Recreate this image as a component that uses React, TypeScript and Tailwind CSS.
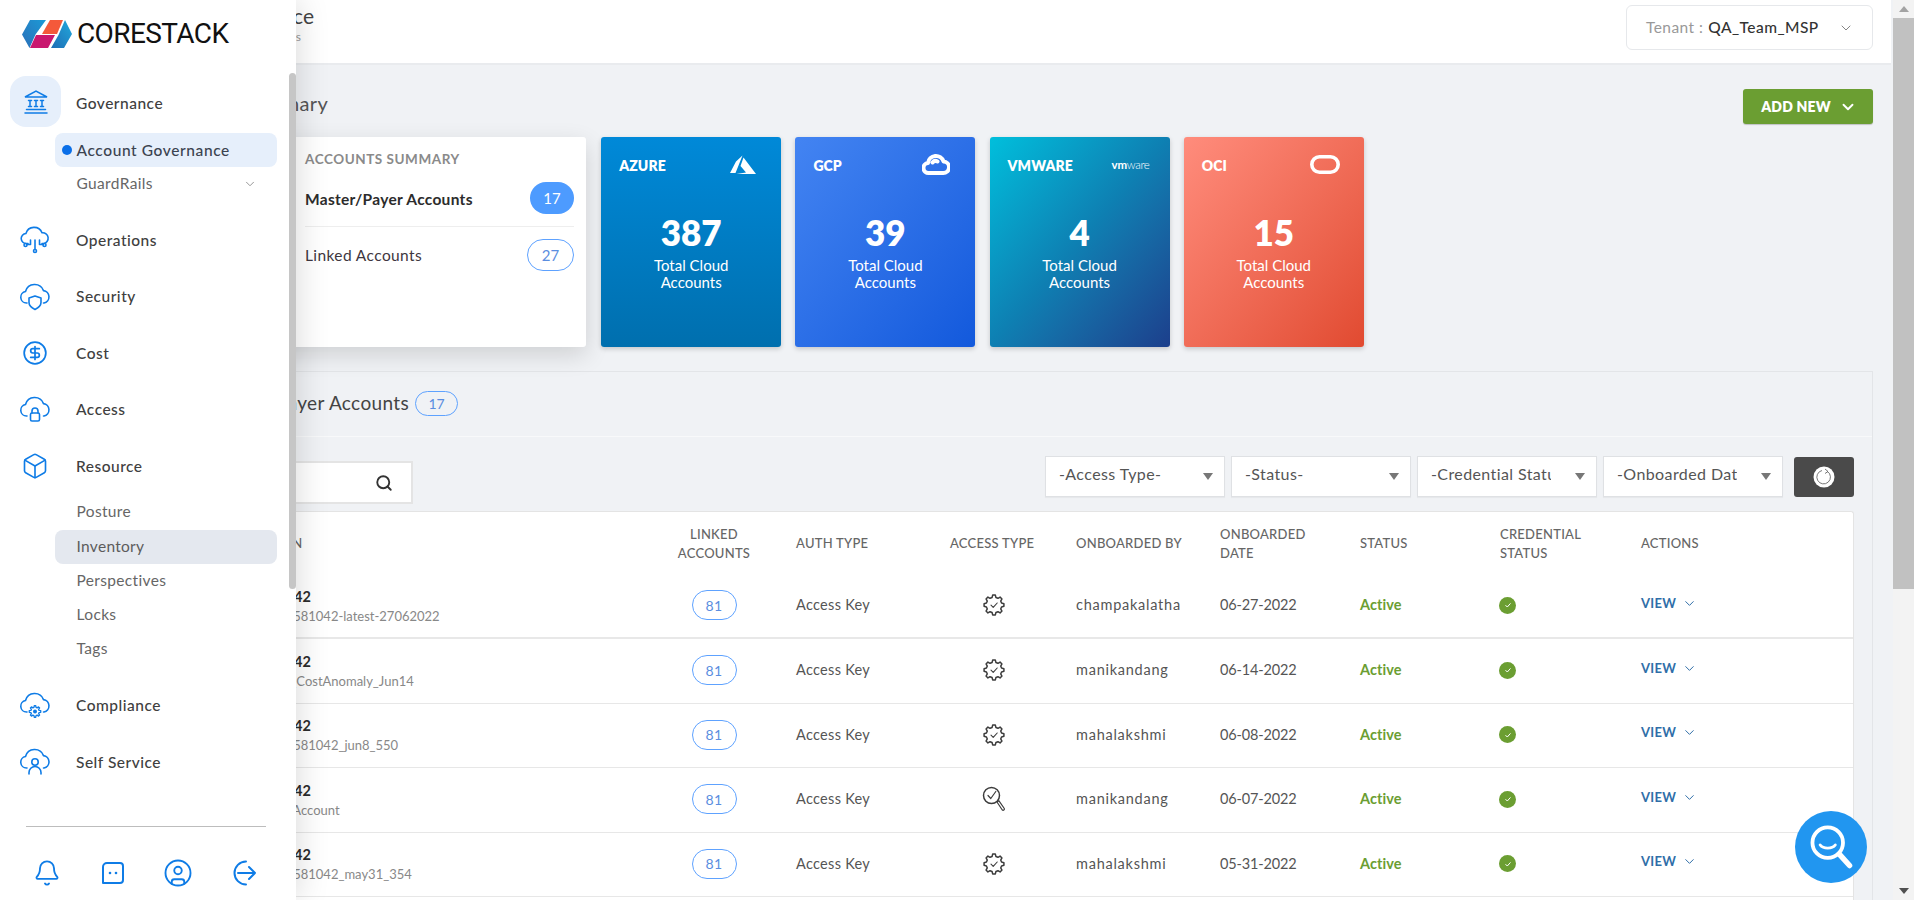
import { ChevronDown, CircleDollarSign, Bell, CircleUser, Box, Search } from "lucide-react";
import type { ReactNode } from "react";

const cloud = "M8 20H7.5a5.8 5.8 0 0 1-1-11.5A9.5 9.5 0 0 1 24.5 7.6 6.3 6.3 0 0 1 25 20h-.5";

function NavSvg({ children }: { children: ReactNode }) {
  return (
    <svg viewBox="0 0 32 28" fill="none" stroke="#0f7ce6" strokeWidth="1.6" strokeLinecap="round" strokeLinejoin="round" className="h-[28px] w-[32px]">
      {children}
    </svg>
  );
}

function gearPath(cx: number, cy: number, outer: number, inner: number, teeth: number) {
  const pts: string[] = [];
  const step = (Math.PI * 2) / teeth;
  for (let i = 0; i < teeth; i++) {
    const a = i * step;
    const offs: [number, number][] = [
      [-0.32, inner],
      [-0.17, outer],
      [0.17, outer],
      [0.32, inner],
    ];
    offs.forEach(([o, r]) => {
      const t = a + o * step;
      pts.push(`${(cx + Math.cos(t) * r).toFixed(2)} ${(cy + Math.sin(t) * r).toFixed(2)}`);
    });
  }
  return "M" + pts.join("L") + "Z";
}

function GearCheck() {
  return (
    <svg viewBox="0 0 22 22" fill="none" stroke="#3c3c3c" strokeWidth="1.5" strokeLinejoin="round" strokeLinecap="round" className="h-[22px] w-[22px]">
      <path d={gearPath(11, 11, 10, 7.8, 8)} />
      <path d="M8 11.2l2.2 2.2 4-4.4" strokeWidth="1.1" />
    </svg>
  );
}

function SearchTick() {
  return (
    <svg viewBox="0 0 24 26" fill="none" stroke="#3c3c3c" strokeWidth="1.5" strokeLinecap="round" strokeLinejoin="round" className="h-[26px] w-[24px]">
      <circle cx="9.500" cy="9.500" r="8" />
      <path d="M6 9.500l2.800 3 5-7" strokeWidth="1.2" />
      <path d="M15 16l1.800-1.300 5.500 7.800a1.300 1.300 0 0 1-2 1.500z" strokeWidth="1.200" />
    </svg>
  );
}

function Logo() {
  return (
    <svg viewBox="0 0 50 28" className="h-[28px] w-[50px]">
      <defs>
        <linearGradient id="lg1" x1="0" y1="1" x2="1" y2="0">
          <stop offset="0" stopColor="#2a6fb8" />
          <stop offset="1" stopColor="#1c9ad6" />
        </linearGradient>
        <linearGradient id="lg2" x1="0" y1="1" x2="1" y2="0">
          <stop offset="0" stopColor="#1e6db5" />
          <stop offset="1" stopColor="#22a9dc" />
        </linearGradient>
      </defs>
      <polygon points="0,14.5 8,0 24,0 13.5,14.5 7.5,28" fill="url(#lg1)" />
      <polygon points="28,0 41,0 35,14 20,14" fill="#f4593a" />
      <polygon points="14,15 33,15 26,28 8,28" fill="#c9186f" />
      <polygon points="43,0 50,14 42,28 29,28 36.5,15" fill="url(#lg2)" />
    </svg>
  );
}

const topIcons: Record<string, ReactNode> = {
  Operations: (
    <NavSvg>
      <path d="M9 17.5H7.5a5 5 0 0 1-.6-10A8.5 8.5 0 0 1 23 6.8a5.4 5.4 0 0 1 1.5 10.7H23" />
      <path d="M16 14v9M11.5 14v4.5H8M20.5 14v4.5H24" />
      <circle cx="6.5" cy="19" r="1.5" />
      <circle cx="25.5" cy="19" r="1.5" />
      <circle cx="16" cy="25" r="1.5" />
    </NavSvg>
  ),
  Security: (
    <NavSvg>
      <path d={cloud} />
      <path d="M16 13l6 2v4.5c0 3.5-3 5.5-6 7-3-1.500-6-3.500-6-7V15z" fill="#fff" />
    </NavSvg>
  ),
  Access: (
    <NavSvg>
      <path d={cloud} />
      <rect x="11.500" y="17" width="9" height="8" rx="1.500" fill="#fff" />
      <path d="M13 17v-2a3 3 0 0 1 6 0v2" />
    </NavSvg>
  ),
  Compliance: (
    <NavSvg>
      <path d={cloud} />
      <path d={gearPath(16, 19.5, 5.8, 4.2, 8)} fill="#fff" strokeWidth="1.3" />
      <circle cx="16" cy="19.500" r="2" fill="#0f7ce6" stroke="none" />
    </NavSvg>
  ),
  "Self Service": (
    <NavSvg>
      <path d={cloud} />
      <circle cx="16" cy="14" r="3.200" />
      <path d="M10 26v-1.500a6 6 0 0 1 12 0V26" />
    </NavSvg>
  ),
};

function NavRow({ label, icon }: { label: string; icon: ReactNode }) {
  return (
    <div className="flex h-[56.500px] items-center">
      <div className="flex w-[70px] justify-center">{icon}</div>
      <span className="ml-[6px] text-[15.500px] font-medium tracking-[0.5px] text-[#404040]">{label}</span>
    </div>
  );
}

function SubRow({ label, active, selected }: { label: string; active?: boolean; selected?: boolean }) {
  return (
    <div
      className={
        "ml-[55px] flex h-[34px] w-[222px] items-center rounded-lg pl-[21.500px] text-[15.500px] " +
        (active ? "bg-[#e6effb] pt-[1px] font-medium tracking-[0.6px] text-[#3b4350] " : selected ? "bg-[#e4e8ef] tracking-[0.3px] text-[#5c5c5c] " : "tracking-[0.35px] text-[#666666] ")
      }
    >
      {label}
    </div>
  );
}

function Sidebar() {
  return (
    <aside className="absolute left-0 top-0 z-10 flex h-[900px] w-[296px] flex-col bg-white shadow-[0_0_32px_rgba(0,0,0,0.16)]">
      <div className="absolute right-0 top-[73px] h-[516px] w-[7px] rounded bg-[#c6c6c6]" />
      <div className="flex h-[66px] items-center pl-[22px] pt-[1px]">
        <Logo />
        <span className="ml-[5px] font-['Roboto',sans-serif] text-[28px] font-[450] leading-none tracking-[-0.6px] text-[#111111]">
          CORESTACK
        </span>
      </div>
      <div className="mt-[10px] flex h-[51px] items-center">
        <div className="ml-[10px] flex h-[51px] w-[51px] items-center justify-center rounded-2xl bg-[#e6effb]">
          <svg viewBox="0 0 28 26" fill="none" stroke="#0f7ce6" strokeWidth="1.500" strokeLinecap="round" className="h-[26px] w-[28px]">
            <path d="M3 8L14 2l11 6H3zM3 24h22M4.500 20.500h19" />
            <path d="M8 11.500v6M14 11.500v6M20 11.500v6M6.500 11.500h3M12.500 11.500h3M18.500 11.500h3M6.500 17.500h3M12.500 17.500h3M18.500 17.500h3" />
          </svg>
        </div>
        <span className="ml-[15px] pt-[4px] text-[15.500px] font-medium tracking-[0.5px] text-[#404040]">Governance</span>
      </div>
      <div className="relative mt-[6px]">
        <span className="absolute left-[62px] top-[12px] h-[10px] w-[10px] rounded-full bg-[#0a6fe8]" />
        <SubRow label="Account Governance" active />
      </div>
      <div className="relative">
        <SubRow label="GuardRails" />
        <ChevronDown className="absolute left-[243px] top-[10px] h-[14px] w-[14px] text-[#888888]" strokeWidth={1.500} />
      </div>
      <div className="mt-[11px]">
        <NavRow label="Operations" icon={topIcons.Operations} />
        <NavRow label="Security" icon={topIcons.Security} />
        <NavRow label="Cost" icon={<CircleDollarSign className="h-[26px] w-[26px] text-[#0f7ce6]" strokeWidth={1.600} />} />
        <NavRow label="Access" icon={topIcons.Access} />
        <NavRow label="Resource" icon={<Box className="h-[28px] w-[28px] text-[#0f7ce6]" strokeWidth={1.400} />} />
      </div>
      <SubRow label="Posture" />
      <div className="mt-[1px]">
        <SubRow label="Inventory" selected />
      </div>
      <SubRow label="Perspectives" />
      <SubRow label="Locks" />
      <SubRow label="Tags" />
      <div className="mt-[12px]">
        <NavRow label="Compliance" icon={topIcons.Compliance} />
        <NavRow label="Self Service" icon={topIcons["Self Service"]} />
      </div>
      <div className="mx-[26px] mt-[35px] w-[240px] border-t border-[#bdbdbd]" />
      <div className="mt-[31px] flex items-center justify-between pl-[33px] pr-[39px] text-[#0f7ce6]">
        <Bell className="h-[28px] w-[28px]" strokeWidth={1.600} />
        <svg viewBox="0 0 26 26" fill="none" stroke="currentColor" strokeWidth="2" className="ml-[1px] h-[26px] w-[26px]">
          <path d="M7 3h13a3 3 0 0 1 3 3v14a3 3 0 0 1-3 3H3V7a4 4 0 0 1 4-4z" strokeLinejoin="round" />
          <circle cx="10" cy="13" r="1.300" fill="currentColor" stroke="none" />
          <circle cx="16" cy="13" r="1.300" fill="currentColor" stroke="none" />
        </svg>
        <CircleUser className="h-[30px] w-[30px]" strokeWidth={1.500} />
        <svg viewBox="0 0 26 28" fill="none" stroke="currentColor" strokeWidth="2" strokeLinecap="round" strokeLinejoin="round" className="h-[28px] w-[26px]">
          <path d="M15 2.500A11.500 11.500 0 0 0 15 25.500" />
          <path d="M7 14h17M18 8l6 6-6 6" />
        </svg>
      </div>
    </aside>
  );
}

const clouds = [
  {
    name: "AZURE",
    count: 387,
    bg: "bg-gradient-to-b from-[#0089d8] to-[#006fae]",
    icon: (
      <svg viewBox="0 0 26 20" fill="#fff" className="-mt-[1px] h-[20px] w-[26px]">
        <path d="M12.500 0.500L6 6.500 0 18h5.500zM13.500 2.500l-3 8.500 5.500 6.500-9.500 1.500H26z" />
      </svg>
    ),
  },
  {
    name: "GCP",
    count: 39,
    bg: "bg-gradient-to-br from-[#4384f2] to-[#1259dc]",
    icon: (
      <svg viewBox="0 0 28 24" fill="none" stroke="#fff" strokeWidth="4" strokeLinecap="round" strokeLinejoin="round" className="-mt-[3px] h-[24px] w-[28px]">
        <path d="M8 21H7a5 5 0 0 1-1-10 8 8 0 0 1 15.500-1.600A5.800 5.800 0 0 1 21 21H8zM10.500 10.500a4 4 0 0 1 5-1" />
      </svg>
    ),
  },
  {
    name: "VMWARE",
    count: 4,
    bg: "bg-gradient-to-br from-[#00bfdc] via-[#0e7fb2] to-[#1c3f8c]",
    icon: (
      <span className="-mr-[5px] -mt-[2px] text-[11.500px] leading-none tracking-[-0.3px] text-white">
        <span className="font-bold">vm</span>
        <span className="font-light">ware</span>
      </span>
    ),
  },
  {
    name: "OCI",
    count: 15,
    bg: "bg-gradient-to-br from-[#ff8c7c] to-[#e14a30]",
    icon: (
      <svg viewBox="0 0 30 19" fill="none" stroke="#fff" strokeWidth="3.600" className="-mr-[1px] -mt-[3px] h-[19px] w-[30px]">
        <rect x="1.800" y="1.800" width="26.400" height="15.400" rx="7.700" />
      </svg>
    ),
  },
];

function CloudCard({ name, count, bg, icon }: (typeof clouds)[number]) {
  return (
    <div className={"flex h-[210px] w-[180px] flex-col rounded-[3px] shadow-[0_2px_5px_rgba(0,0,0,0.18)] " + bg}>
      <div className="flex h-[56px] items-center justify-between pl-[18px] pr-[25px] pt-[1px]">
        <span className="text-[14px] font-extrabold tracking-[0.1px] text-white">{name}</span>
        {icon}
      </div>
      <div className="mt-[17px] text-center text-[35px] font-extrabold leading-[44px] text-white">{count}</div>
      <div className="mt-[3px] text-center text-[15px] leading-[17px] text-white">
        Total Cloud
        <br />
        Accounts
      </div>
    </div>
  );
}

const rows = [
  { sub: "QA_MSP_Tea_581042-latest-27062022", access: "gear", by: "champakalatha", date: "06-27-2022" },
  { sub: "Test_Payer_1s_CostAnomaly_Jun14", access: "gear", by: "manikandang", date: "06-14-2022" },
  { sub: "QA_MSP_Tea_581042_jun8_550", access: "gear", by: "mahalakshmi", date: "06-08-2022" },
  { sub: "QA_Master_A Account", access: "search", by: "manikandang", date: "06-07-2022" },
  { sub: "QA_MSP_Tea_581042_may31_354", access: "gear", by: "mahalakshmi", date: "05-31-2022" },
  { sub: "QA_MSP_Tea_581042_may30_120", access: "gear", by: "mahalakshmi", date: "05-30-2022" },
];

const gridCols = "grid grid-cols-[533px_132px_154px_126px_144px_140px_140px_141px_1fr] items-center";

function Filter({ label }: { label: string }) {
  return (
    <div className="flex h-[41px] w-[180px] items-center justify-between border border-[#dfe1e4] bg-white pl-[13px] pr-[11px] shadow-[0_1px_1px_rgba(0,0,0,0.04)]">
      <span className="mb-[5px] w-[120px] overflow-hidden whitespace-nowrap text-[16px] tracking-[0.4px] text-[#555555]">{label}</span>
      <span className="h-0 w-0 border-x-[5px] border-t-[7px] border-x-transparent border-t-[#777777]" />
    </div>
  );
}

function Head({ children }: { children: ReactNode }) {
  return <div className="text-[13px] font-medium uppercase leading-[19px] tracking-[0.25px] text-[#666666]">{children}</div>;
}

export default function App() {
  return (
    <div className="relative flex h-[900px] w-[1920px] overflow-hidden bg-white font-['Lato',sans-serif]">
      <Sidebar />
      <main className="h-[900px] w-[1893px] shrink-0 overflow-hidden bg-[#f0f2f5]">
        <header className="flex h-[65px] w-[1891px] items-start justify-between border-b-2 border-[#e9ebee] bg-white pr-[18px]">
          <div className="mt-[3px] w-[314px] text-right">
            <div className="text-[21px] leading-[26px] text-[#444444]">Account Governance</div>
            <div className="pr-[13px] text-[12px] leading-[16px] text-[#999999]">Accounts</div>
          </div>
          <div className="mt-[5px] flex h-[45px] w-[247px] items-center rounded-md border border-[#e6e8eb] bg-white pl-[19px] text-[15.500px] tracking-[0.45px]">
            <span className="text-[#999999]">Tenant :</span>
            <span className="ml-[5px] font-medium text-[#333333]">QA_Team_MSP</span>
            <ChevronDown className="ml-[19px] h-[16px] w-[16px] text-[#666666]" strokeWidth={1.200} />
          </div>
        </header>
        <div className="pr-[20px]">
          <div className="mt-[24px] flex h-[35px] items-center justify-between">
            <div className="w-[328px] pb-[7px] text-right text-[20px] tracking-[0.3px] text-[#555555]">Accounts Summary</div>
            <button className="flex h-[35px] w-[130px] items-center justify-center gap-[8px] rounded-[3px] bg-[#6b9e32] pl-[2px] text-[14px] font-extrabold tracking-[0.2px] text-white shadow-[0_1px_1px_rgba(0,0,0,0.2)]">
              ADD NEW
              <ChevronDown className="h-[18px] w-[18px]" strokeWidth={2.500} />
            </button>
          </div>
          <div className="ml-[200px] mt-[13px] flex gap-[14.200px]">
            <div className="mr-[1px] h-[210px] w-[386px] rounded-[3px] bg-white pl-[105px] pr-[12px] shadow-[0_8px_24px_rgba(0,0,0,0.14)]">
              <div className="pt-[12px] text-[13.500px] font-bold uppercase tracking-[0.55px] text-[#8a8a8a]">Accounts Summary</div>
              <div className="mt-[11px] flex h-[47px] items-center justify-between border-b border-[#eeeeee] pb-[10px]">
                <span className="pt-[2px] text-[15.500px] font-bold tracking-[0.3px] text-[#2c2c2c]">Master/Payer Accounts</span>
                <span className="flex h-[32px] w-[44px] items-center justify-center rounded-full bg-[#4d9bff] text-[15px] text-white">17</span>
              </div>
              <div className="mt-[12px] flex items-center justify-between">
                <span className="text-[15.500px] tracking-[0.4px] text-[#3e3640]">Linked Accounts</span>
                <span className="flex h-[32px] w-[47px] items-center justify-center rounded-full border border-[#5ea2ff] text-[15px] text-[#5b8ee0]">27</span>
              </div>
            </div>
            {clouds.map((c) => (
              <CloudCard key={c.name} {...c} />
            ))}
          </div>
          <section className="ml-[110px] mt-[24px] border border-b-0 border-[#e3e5e8] pb-[20px]">
            <div className="flex h-[65px] items-center border-b border-[#f8f9fa] pb-[1px]">
              <div className="w-[298px] text-right text-[19px] tracking-[0.35px] text-[#444444]">Master/Payer Accounts</div>
              <span className="ml-[6px] flex h-[25px] w-[43px] items-center justify-center rounded-full border border-[#5ea2ff] text-[14px] text-[#5b8ee0]">17</span>
            </div>
            <div className="flex h-[74px] items-start justify-between pl-[20px] pr-[18px] pt-[19px]">
              <div className="mt-[5px] flex h-[43px] w-[282px] items-center justify-end border-2 border-[#e4e4e4] bg-white pr-[18px]">
                <Search className="h-[18px] w-[18px] text-[#333333]" strokeWidth={2.500} />
              </div>
              <div className="flex items-center">
                <div className="flex gap-[6px]">
                  <Filter label="-Access Type-" />
                  <Filter label="-Status-" />
                  <Filter label="-Credential Status-" />
                  <Filter label="-Onboarded Date-" />
                </div>
                <button className="ml-[11px] flex h-[40px] w-[60px] items-center justify-center rounded-[3px] bg-[#4a4a4a]">
                  <svg viewBox="0 0 22 22" className="h-[22px] w-[22px]">
                    <circle cx="11" cy="11" r="10.500" fill="#fff" />
                    <path d="M14.500 5.500A6.800 6.800 0 1 1 9 4.500" fill="none" stroke="#555" strokeWidth="0.800" />
                    <path d="M12 3l3 2.500-3 2" fill="none" stroke="#555" strokeWidth="0.800" />
                  </svg>
                </button>
              </div>
            </div>
            <div className="ml-[19px] mr-[18px] rounded-t-[3px] border border-b-0 border-[#e4e4e4] bg-white">
              <div className={gridCols + " h-[62.500px] pt-[1px]"}>
                <div className="pl-[84px]"><Head>Description</Head></div>
                <div className="w-[100px] text-center"><Head>Linked<br />Accounts</Head></div>
                <Head>Auth Type</Head>
                <Head>Access Type</Head>
                <Head>Onboarded By</Head>
                <Head>Onboarded<br />Date</Head>
                <Head>Status</Head>
                <Head>Credential<br />Status</Head>
                <Head>Actions</Head>
              </div>
              {rows.map((r, i) => (
                <div
                  key={r.date}
                  className={gridCols + " h-[64.500px] pb-[1px] text-[14.500px] tracking-[0.3px] text-[#555555] " + (i === 0 ? "border-b-2 border-[#e8e8e8]" : "border-b border-[#e7e7e7]")}
                >
                  <div className="pl-[79px] pt-[2px]">
                    <div className="text-[14.500px] font-bold leading-[20px] tracking-[0px] text-[#2c2c2c]">652158581042</div>
                    <div className="text-[13px] leading-[19px] tracking-[0px] text-[#888888]">{r.sub}</div>
                  </div>
                  <div className="flex w-[100px] justify-center">
                    <span className="flex h-[30px] w-[45px] items-center justify-center rounded-full border border-[#5ea2ff] text-[14px] text-[#5b8ee0]">81</span>
                  </div>
                  <div>Access Key</div>
                  <div className="flex w-[88px] justify-center">
                    {r.access === "gear" ? <GearCheck /> : <SearchTick />}
                  </div>
                  <div className="tracking-[0.75px]">{r.by}</div>
                  <div className="tracking-[-0.15px]">{r.date}</div>
                  <div className="font-bold tracking-[0.1px] text-[#6b9e32]">Active</div>
                  <div className="-ml-[1px]">
                    <span className="flex h-[17px] w-[17px] items-center justify-center rounded-full bg-[#6b9e32]">
                      <svg viewBox="0 0 10 10" fill="none" stroke="#fff" strokeWidth="1" className="h-[10px] w-[10px]">
                        <path d="M2.500 5.200l1.800 1.800 3.200-3.600" />
                      </svg>
                    </span>
                  </div>
                  <div className="-mt-[4px] flex items-center gap-[6px] text-[13px] font-bold tracking-[0.3px] text-[#2f6ea8]">
                    VIEW
                    <ChevronDown className="h-[15px] w-[15px]" strokeWidth={1.600} />
                  </div>
                </div>
              ))}
            </div>
          </section>
        </div>
      </main>
      <div className="flex h-[900px] w-[21px] shrink-0 flex-col bg-[#f3f3f3]">
        <div className="flex h-[18px] items-center justify-center">
          <span className="h-0 w-0 border-x-[5px] border-b-[6px] border-x-transparent border-b-[#a3a3a3]" />
        </div>
        <div className="h-[571px] bg-[#c1c1c1]" />
        <div className="mt-auto flex h-[18px] items-center justify-center">
          <span className="h-0 w-0 border-x-[5px] border-t-[6px] border-x-transparent border-t-[#505050]" />
        </div>
      </div>
      <div className="absolute left-[1795px] top-[811px] z-20 flex h-[72px] w-[72px] items-center justify-center rounded-full bg-[#2196f0]">
        <svg viewBox="0 0 44 44" fill="none" stroke="#fff" strokeWidth="3.500" strokeLinecap="round" className="h-[48px] w-[48px]">
          <circle cx="19" cy="18" r="14" />
          <path d="M30 29l9 10" strokeWidth="5" />
          <path d="M12 20c3 4 11 4 14 0" strokeWidth="2.500" />
        </svg>
      </div>
    </div>
  );
}
